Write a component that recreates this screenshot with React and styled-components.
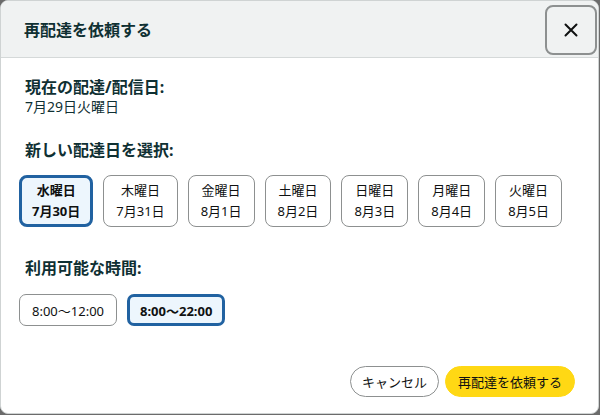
import { useState } from "react";
import styled, { createGlobalStyle } from "styled-components";

const Global = createGlobalStyle`
  html, body {
    margin: 0;
    padding: 0;
    background: #6b6b6b;
    font-family: "Noto Sans", "Noto Sans CJK JP", sans-serif;
  }
`;

const Dialog = styled.div`
  box-sizing: border-box;
  width: 599px;
  height: 414px;
  background: #ffffff;
  border: 1px solid #cfd3d3;
  border-radius: 8px;
  overflow: hidden;
  display: flex;
  flex-direction: column;
`;

const Header = styled.div`
  height: 56px;
  background: #f0f2f2;
  border-bottom: 1px solid #d5d9d9;
  display: flex;
  align-items: center;
  justify-content: space-between;
  padding: 0 0 0 23px;
`;

const Title = styled.h1`
  margin: 0;
  font-size: 16px;
  font-weight: 700;
  color: #0f3033;
`;

const CloseButton = styled.button`
  box-sizing: border-box;
  width: 52px;
  height: 50px;
  margin-right: 1px;
  margin-top: 1px;
  border: 2px solid #8d9090;
  border-radius: 8px;
  background: #f0f2f2;
  display: flex;
  align-items: center;
  justify-content: center;
  padding: 0;
  cursor: pointer;
`;

const Body = styled.div`
  flex: 1;
  padding: 19px 22px 0 18px;
  display: flex;
  flex-direction: column;
`;

const Heading = styled.h2`
  margin: ${(p) => p.$top || 0}px 0 0 6px;
  font-size: 16px;
  line-height: 20px;
  font-weight: 700;
  color: #0f3033;
`;

const Current = styled.p`
  margin: 0 0 0 6px;
  font-size: 14px;
  line-height: 20px;
  color: #0f3033;
`;

const Row = styled.div`
  display: flex;
  gap: ${(p) => p.$gap}px;
  margin-top: ${(p) => p.$top}px;
`;

const DayButton = styled.button`
  box-sizing: border-box;
  height: 52px;
  padding: 0 ${(p) => (p.$active ? 10 : 12)}px;
  border: ${(p) => (p.$active ? "3px solid #2162a1" : "1px solid #8d9090")};
  border-radius: 8px;
  background: ${(p) => (p.$active ? "#edf6fd" : "#ffffff")};
  font-family: inherit;
  font-size: 13px;
  line-height: 21px;
  font-weight: ${(p) => (p.$active ? 700 : 400)};
  color: #0f1111;
  display: flex;
  flex-direction: column;
  align-items: center;
  justify-content: center;
  cursor: pointer;
`;

const TimeButton = styled.button`
  box-sizing: border-box;
  height: 32px;
  padding: 0 ${(p) => (p.$active ? 10 : 12)}px;
  border: ${(p) => (p.$active ? "3px solid #2162a1" : "1px solid #8d9090")};
  border-radius: 7px;
  background: ${(p) => (p.$active ? "#edf6fd" : "#ffffff")};
  font-family: inherit;
  font-size: 13px;
  font-weight: ${(p) => (p.$active ? 700 : 400)};
  color: #0f1111;
  cursor: pointer;
`;

const Footer = styled.div`
  display: flex;
  justify-content: flex-end;
  gap: 6px;
  margin-top: 40px;
  padding-right: 1px;
`;

const PillButton = styled.button`
  box-sizing: border-box;
  height: 31px;
  padding: 0 ${(p) => (p.$primary ? 12 : 11)}px;
  border-radius: 16px;
  border: ${(p) => (p.$primary ? "1px solid #ffd814" : "1px solid #8d9090")};
  background: ${(p) => (p.$primary ? "#ffd814" : "#ffffff")};
  font-family: inherit;
  font-size: 13px;
  color: #0f1111;
  cursor: pointer;
`;

const days = [
  ["水曜日", "7月30日"],
  ["木曜日", "7月31日"],
  ["金曜日", "8月1日"],
  ["土曜日", "8月2日"],
  ["日曜日", "8月3日"],
  ["月曜日", "8月4日"],
  ["火曜日", "8月5日"],
];

const times = ["8:00～12:00", "8:00～22:00"];

export default function App() {
  const [day, setDay] = useState(0);
  const [time, setTime] = useState(1);

  return (
    <>
      <Global />
      <Dialog>
        <Header>
          <Title>再配達を依頼する</Title>
          <CloseButton aria-label="閉じる">
            <svg width="14" height="14" viewBox="0 0 14 14">
              <path
                d="M1.5 1.5 L12.5 12.5 M12.5 1.5 L1.5 12.5"
                stroke="#0f1111"
                strokeWidth="2"
                strokeLinecap="round"
              />
            </svg>
          </CloseButton>
        </Header>
        <Body>
          <Heading>現在の配達/配信日:</Heading>
          <Current>7月29日火曜日</Current>

          <Heading $top={23}>新しい配達日を選択:</Heading>
          <Row $gap={10} $top={15}>
            {days.map(([w, d], i) => (
              <DayButton key={d} $active={day === i} onClick={() => setDay(i)}>
                <span>{w}</span>
                <span>{d}</span>
              </DayButton>
            ))}
          </Row>

          <Heading $top={31}>利用可能な時間:</Heading>
          <Row $gap={10} $top={16}>
            {times.map((t, i) => (
              <TimeButton key={t} $active={time === i} onClick={() => setTime(i)}>
                {t}
              </TimeButton>
            ))}
          </Row>

          <Footer>
            <PillButton>キャンセル</PillButton>
            <PillButton $primary>再配達を依頼する</PillButton>
          </Footer>
        </Body>
      </Dialog>
    </>
  );
}
